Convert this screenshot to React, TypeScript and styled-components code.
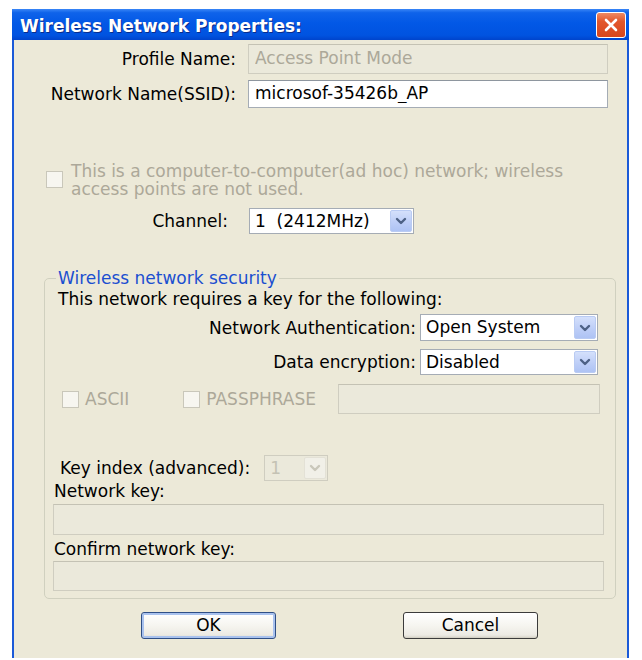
import React from 'react';
import styled, { createGlobalStyle } from 'styled-components';

const GlobalStyle = createGlobalStyle`
  html, body {
    margin: 0;
    padding: 0;
    background: #ffffff;
  }
  body {
    font-family: "DejaVu Sans", Verdana, sans-serif;
  }
`;

const Page = styled.div`
  padding: 9px 0 0 12px;
`;

const Window = styled.div`
  width: 617px;
  display: flex;
  flex-direction: column;
`;

const TitleBar = styled.div`
  height: 31px;
  box-sizing: border-box;
  display: flex;
  align-items: center;
  justify-content: space-between;
  padding: 0 3px 0 8px;
  background: linear-gradient(
    to bottom,
    #3a86f7 0%,
    #0f63ea 12%,
    #0258e6 45%,
    #0053e0 85%,
    #0044cc 100%
  );
`;

const Title = styled.span`
  font-family: "DejaVu Sans", Verdana, sans-serif;
  font-weight: bold;
  font-size: 17px;
  color: #ffffff;
  padding-top: 3px;
  text-shadow: 1px 1px 0 #0a2d8c;
`;

const CloseButton = styled.div`
  width: 28px;
  height: 24px;
  border: 1px solid #ffffff;
  border-radius: 3px;
  background: linear-gradient(to bottom, #ee8a64 0%, #e2572c 35%, #d9461c 100%);
  display: flex;
  align-items: center;
  justify-content: center;
`;

const Body = styled.div`
  background: #ece9d8;
  border-left: 2px solid #1b5ad8;
  border-right: 2px solid #1b5ad8;
  padding: 4px 0 19px 0;
  display: flex;
  flex-direction: column;
  font-size: 17px;
  color: #000000;
`;

const FieldRow = styled.div<{ $labelWidth: number; $gap: number; $top: number }>`
  display: grid;
  grid-template-columns: ${(p) => p.$labelWidth}px auto;
  column-gap: ${(p) => p.$gap}px;
  align-items: center;
  margin-top: ${(p) => p.$top}px;
`;

const RightLabel = styled.span`
  text-align: right;
  white-space: nowrap;
`;

const TextBox = styled.input<{ $w: number; $h: number }>`
  box-sizing: border-box;
  width: ${(p) => p.$w}px;
  height: ${(p) => p.$h}px;
  margin: 0;
  padding: 0 6px 3px 6px;
  font-family: "DejaVu Sans", Verdana, sans-serif;
  font-size: 17px;
  color: #000000;
  background: #ffffff;
  border: 1px solid #a5acb5;
  border-top-color: #8e969f;
  outline: none;

  &:disabled,
  &:read-only[data-off] {
    background: #ebe9db;
    color: #aca899;
    border-color: #cfcdc0;
    border-top-color: #c4c2b4;
  }
`;

const AdHoc = styled.div`
  display: flex;
  align-items: flex-start;
  gap: 8px;
  margin: 54px 0 0 32px;
  color: #aca899;
  line-height: 18px;
`;

const CheckBox = styled.span<{ $top?: number }>`
  box-sizing: border-box;
  flex: none;
  width: 17px;
  height: 17px;
  margin-top: ${(p) => p.$top ?? 0}px;
  border: 1px solid #c9c7ba;
  background: #f7f6f0;
`;

const SelectBox = styled.div<{ $w: number; $h: number; $off?: boolean }>`
  box-sizing: border-box;
  width: ${(p) => p.$w}px;
  height: ${(p) => p.$h}px;
  display: flex;
  align-items: stretch;
  border: 1px solid ${(p) => (p.$off ? '#cfcdc0' : '#a5acb5')};
  background: ${(p) => (p.$off ? '#ebe9db' : '#ffffff')};
  color: ${(p) => (p.$off ? '#c4c2b4' : '#000000')};
  padding: 1px;
`;

const SelectValue = styled.span`
  flex: 1;
  display: flex;
  align-items: center;
  padding-left: 4px;
  padding-bottom: 1px;
  white-space: pre;
`;

const DropButton = styled.span<{ $off?: boolean }>`
  box-sizing: border-box;
  width: 22px;
  display: flex;
  align-items: center;
  justify-content: center;
  border: 1px solid ${(p) => (p.$off ? '#e3e1d6' : '#b9cbf3')};
  border-radius: 2px;
  background: ${(p) =>
    p.$off ? '#f1f0e8' : 'linear-gradient(to bottom, #d4e0fb 0%, #bccdf7 60%, #aec3f4 100%)'};
`;

const GroupBox = styled.fieldset`
  margin: 34px 0 0 30px;
  width: 572px;
  box-sizing: border-box;
  min-width: 0;
  padding: 0 11px 7px 8px;
  border: 1px solid #d0d0bf;
  border-radius: 5px;
  display: flex;
  flex-direction: column;
`;

const Legend = styled.legend`
  margin-left: 3px;
  padding: 0 2px;
  line-height: 20px;
  color: #1b4fd0;
`;

const Intro = styled.div`
  margin: 1px 0 0 5px;
  line-height: 20px;
`;

const AuthRow = styled.div<{ $top: number; $h: number }>`
  display: flex;
  justify-content: flex-end;
  align-items: center;
  gap: 4px;
  padding-right: 6px;
  margin-top: ${(p) => p.$top}px;
  height: ${(p) => p.$h}px;
`;

const KeyRow = styled.div`
  display: flex;
  align-items: center;
  margin-top: 9px;
  height: 30px;
  color: #aca899;
`;

const CheckLabel = styled.label<{ $left: number; $gap: number }>`
  display: flex;
  align-items: center;
  gap: ${(p) => p.$gap}px;
  margin-left: ${(p) => p.$left}px;
`;

const IndexRow = styled.div`
  display: flex;
  align-items: center;
  gap: 14px;
  margin: 41px 0 0 7px;
`;

const FieldLabel = styled.div<{ $top: number }>`
  margin: ${(p) => p.$top}px 0 0 1px;
  line-height: 20px;
`;

const ButtonRow = styled.div`
  display: flex;
  gap: 127px;
  margin: 13px 0 0 127px;
`;

const DialogButton = styled.button<{ $default?: boolean }>`
  box-sizing: border-box;
  width: 135px;
  height: 27px;
  padding: 0 0 2px 0;
  font-family: "DejaVu Sans", Verdana, sans-serif;
  font-size: 17px;
  color: #000000;
  border: 1px solid ${(p) => (p.$default ? '#2f4f86' : '#3b3b3b')};
  border-radius: 3px;
  background: linear-gradient(to bottom, #ffffff 0%, #f6f5f0 50%, #eceae3 88%, #d6d3c8 100%);
  box-shadow: ${(p) => (p.$default ? 'inset 0 0 0 2px #a9c2ee' : 'inset 0 -1px 0 #d5d2c6')};
`;

const Chevron: React.FC<{ off?: boolean }> = ({ off }) => (
  <svg width="12" height="8" viewBox="0 0 12 8">
    <path
      d="M2 2 L6 6 L10 2"
      fill="none"
      stroke={off ? '#c9c7ba' : '#4d6185'}
      strokeWidth="2.4"
      strokeLinecap="round"
      strokeLinejoin="round"
    />
  </svg>
);

interface DropdownProps {
  value: string;
  width: number;
  height: number;
  off?: boolean;
}

const Dropdown: React.FC<DropdownProps> = ({ value, width, height, off }) => (
  <SelectBox $w={width} $h={height} $off={off}>
    <SelectValue>{value}</SelectValue>
    <DropButton $off={off}>
      <Chevron off={off} />
    </DropButton>
  </SelectBox>
);

export default function App() {
  return (
    <Page>
      <GlobalStyle />
      <Window>
        <TitleBar>
          <Title>Wireless Network Properties:</Title>
          <CloseButton>
            <svg width="14" height="14" viewBox="0 0 14 14">
              <path d="M2 2 L12 12 M12 2 L2 12" stroke="#ffffff" strokeWidth="2.6" strokeLinecap="round" />
            </svg>
          </CloseButton>
        </TitleBar>
        <Body>
          <FieldRow $labelWidth={222} $gap={12} $top={0}>
            <RightLabel>Profile Name:</RightLabel>
            <TextBox $w={360} $h={30} readOnly data-off defaultValue="Access Point Mode" />
          </FieldRow>
          <FieldRow $labelWidth={222} $gap={12} $top={6}>
            <RightLabel>Network Name(SSID):</RightLabel>
            <TextBox $w={360} $h={28} readOnly defaultValue="microsof-35426b_AP" />
          </FieldRow>

          <AdHoc>
            <CheckBox $top={9} />
            <span>
              This is a computer-to-computer(ad hoc) network; wireless
              <br />
              access points are not used.
            </span>
          </AdHoc>

          <FieldRow $labelWidth={214} $gap={21} $top={10}>
            <RightLabel>Channel:</RightLabel>
            <Dropdown value="1  (2412MHz)" width={165} height={26} />
          </FieldRow>

          <GroupBox>
            <Legend>Wireless network security</Legend>
            <Intro>This network requires a key for the following:</Intro>
            <AuthRow $top={5} $h={27}>
              <span>Network Authentication:</span>
              <Dropdown value="Open System" width={178} height={27} />
            </AuthRow>
            <AuthRow $top={8} $h={26}>
              <span>Data encryption:</span>
              <Dropdown value="Disabled" width={178} height={26} />
            </AuthRow>
            <KeyRow>
              <CheckLabel $left={9} $gap={6}>
                <CheckBox />
                ASCII
              </CheckLabel>
              <CheckLabel $left={54} $gap={6}>
                <CheckBox />
                PASSPHRASE
              </CheckLabel>
              <TextBox $w={262} $h={30} style={{ marginLeft: 'auto', marginRight: 4 }} disabled />
            </KeyRow>
            <IndexRow>
              <span>Key index (advanced):</span>
              <Dropdown value="1" width={64} height={26} off />
            </IndexRow>
            <FieldLabel $top={0}>Network key:</FieldLabel>
            <TextBox $w={551} $h={31} disabled style={{ marginTop: 3 }} />
            <FieldLabel $top={4}>Confirm network key:</FieldLabel>
            <TextBox $w={551} $h={30} disabled style={{ marginTop: 2 }} />
          </GroupBox>

          <ButtonRow>
            <DialogButton $default>OK</DialogButton>
            <DialogButton>Cancel</DialogButton>
          </ButtonRow>
        </Body>
      </Window>
    </Page>
  );
}
